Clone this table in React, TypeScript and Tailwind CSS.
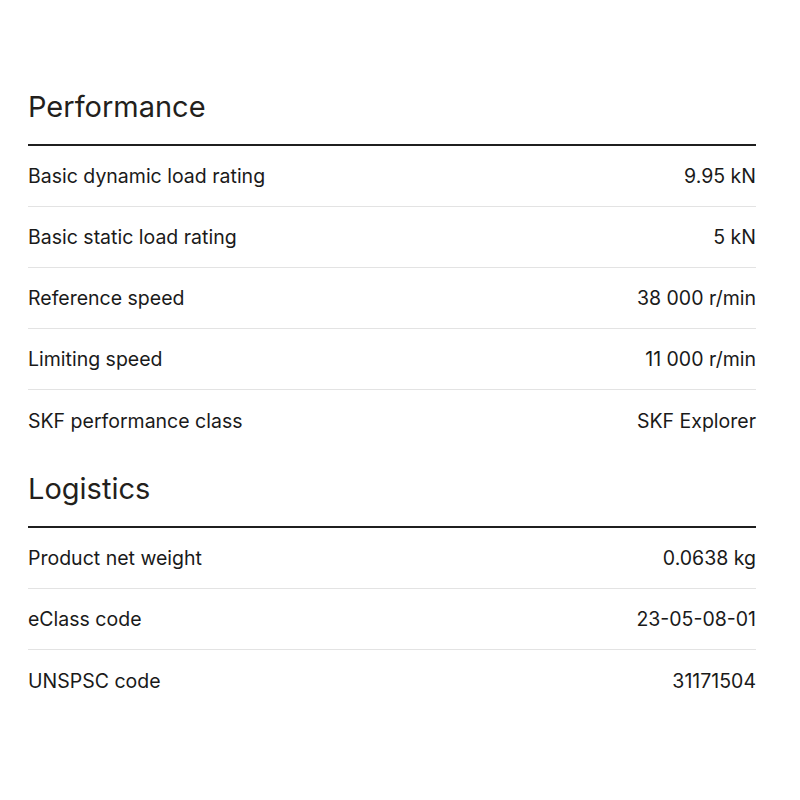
const performance = [
  ["Basic dynamic load rating", "9.95 kN"],
  ["Basic static load rating", "5 kN"],
  ["Reference speed", "38 000 r/min"],
  ["Limiting speed", "11 000 r/min"],
  ["SKF performance class", "SKF Explorer"],
]

const logistics = [
  ["Product net weight", "0.0638 kg"],
  ["eClass code", "23-05-08-01"],
  ["UNSPSC code", "31171504"],
]

function Section({ title, rows, className }: { title: string; rows: string[][]; className?: string }) {
  return (
    <section className={className}>
      <h2 className="text-[29px] leading-[36px] pb-[19px] border-b-2 border-[#1f1f1f] text-[#231f1c]">
        {title}
      </h2>
      <div>
        {rows.map(([label, value], i) => (
          <div
            key={label}
            className={
              "h-[61px] pt-[2px] flex items-center justify-between text-[19.5px] text-[#1a1a1a] " +
              (i < rows.length - 1 ? "border-b border-[#e3e3e3]" : "")
            }
          >
            <span>{label}</span>
            <span>{value}</span>
          </div>
        ))}
      </div>
    </section>
  )
}

export default function App() {
  return (
    <div className="min-h-screen bg-white px-[28px] pt-[89px] font-['Inter',sans-serif]">
      <div className="w-[728px]">
        <Section title="Performance" rows={performance} />
        <Section title="Logistics" rows={logistics} className="mt-[20px]" />
      </div>
    </div>
  )
}
